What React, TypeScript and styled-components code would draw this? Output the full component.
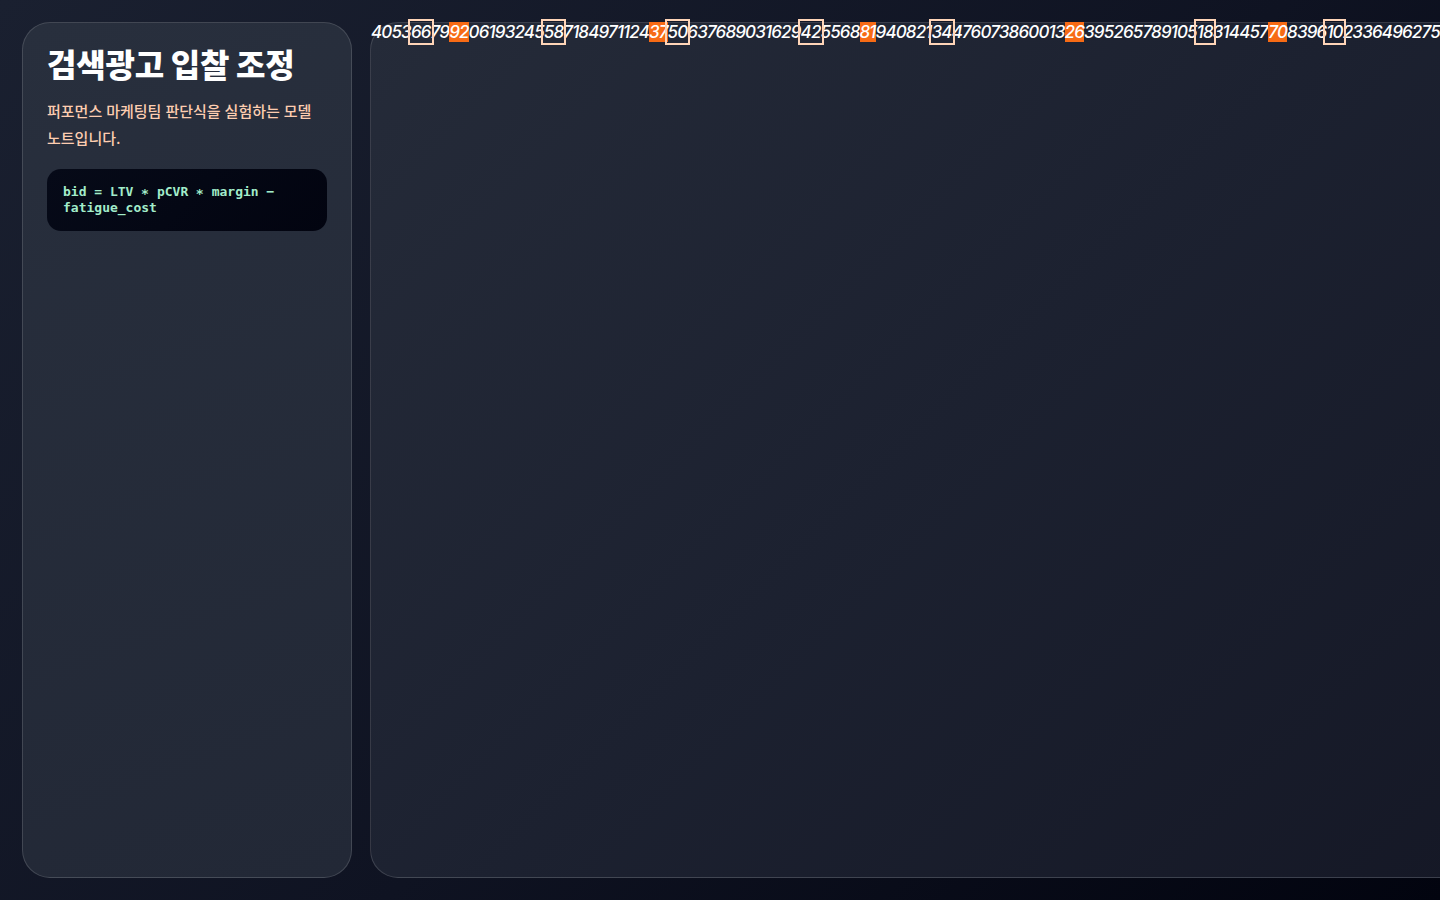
import styled, { createGlobalStyle } from "styled-components";

const GlobalStyle = createGlobalStyle`
  * {
    box-sizing: border-box;
  }

  html,
  body {
    margin: 0;
    padding: 0;
    height: 100%;
    overflow: hidden;
  }

  body {
    font-family: Inter, "Noto Sans CJK KR", "Noto Sans", sans-serif;
    color: #ffffff;
    background: linear-gradient(135deg, #1a2030 0%, #0f1322 55%, #02040f 100%);
  }
`;

// pairs step by 13 (mod 99) from 40; every 11th is a hit, every 7th is a candidate
const PAIRS = Array.from({ length: 60 }, (_, i) => (40 + 13 * i) % 99);

type Mark = "hit" | "pick" | "none";

const markOf = (i: number): Mark => {
  if (i % 11 === 4) return "hit";
  if (i % 7 === 2) return "pick";
  return "none";
};

const App = () => {
  return (
    <>
      <GlobalStyle />
      <StPage>
        <StSidebar>
          <StTitle>검색광고 입찰 조정</StTitle>
          <StLead>퍼포먼스 마케팅팀 판단식을 실험하는 모델 노트입니다.</StLead>
          <StCode>bid = LTV ∗ pCVR ∗ margin − fatigue_cost</StCode>
        </StSidebar>

        <StBoard>
          <StDigits>
            {PAIRS.map((n, i) => (
              <StPair key={i} $mark={markOf(i)}>
                {String(n).padStart(2, "0")}
              </StPair>
            ))}
          </StDigits>
        </StBoard>
      </StPage>
    </>
  );
};

export default App;

const StPage = styled.div`
  display: grid;
  grid-template-columns: 330px 1fr;
  gap: 18px;
  height: 100vh;
  padding: 22px;
`;

const StSidebar = styled.aside`
  display: flex;
  flex-direction: column;
  padding: 22px 24px;

  background: linear-gradient(160deg, #282f3d 0%, #222836 100%);
  border: 1px solid rgba(255, 255, 255, 0.14);
  border-radius: 28px;
`;

const StTitle = styled.h1`
  margin: 0;
  font-size: 32px;
  font-weight: 800;
  line-height: 42px;
  letter-spacing: -0.2px;
  color: #ffffff;
`;

const StLead = styled.p`
  margin: 11px 0 0;
  font-size: 15px;
  font-weight: 500;
  line-height: 27px;
  color: #fdcdb0;
`;

const StCode = styled.pre`
  margin: 17px 0 0;
  padding: 15px 16px;

  font-family: "DejaVu Sans Mono", "Liberation Mono", monospace;
  font-size: 13px;
  font-weight: 700;
  line-height: 16px;
  color: #a2ecca;
  white-space: pre-wrap;

  background: linear-gradient(135deg, #060a18 0%, #020410 100%);
  border-radius: 14px;
`;

const StBoard = styled.main`
  min-width: 0;

  background: linear-gradient(135deg, #252b39 0%, #1c2130 50%, #151826 100%);
  border: 1px solid rgba(255, 255, 255, 0.14);
  border-right: none;
  border-radius: 28px 0 0 28px;
  margin-right: -60px;
`;

const StDigits = styled.div`
  font-size: 17px;
  font-style: italic;
  font-weight: 500;
  line-height: 18px;
  letter-spacing: -0.85px;
  white-space: nowrap;
  color: #ffffff;
`;

const StPair = styled.span<{ $mark: Mark }>`
  background: ${({ $mark }) => ($mark === "hit" ? "#f76b15" : "transparent")};
  outline: ${({ $mark }) => ($mark === "pick" ? "2px solid #ffd5b8" : "none")};
  outline-offset: 1px;
`;
